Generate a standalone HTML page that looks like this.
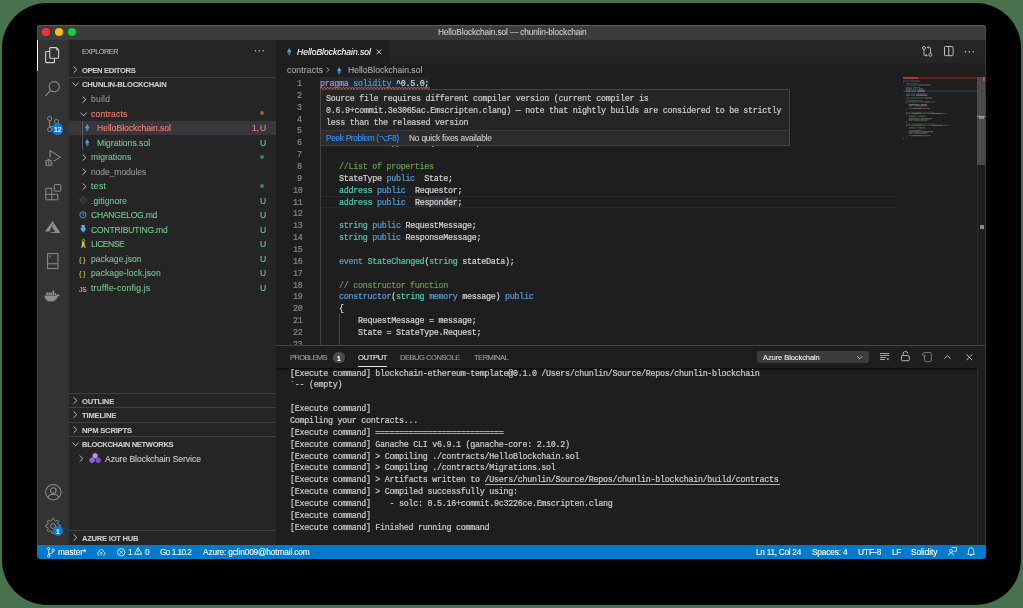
<!DOCTYPE html>
<html><head><meta charset="utf-8"><title>VS Code</title><style>
html,body{margin:0;padding:0;width:1023px;height:608px;overflow:hidden;background:#48724e;}
body{position:relative;font-family:"Liberation Sans",sans-serif;color:#cccccc;}
div{box-sizing:border-box;}
.a{position:absolute;}
svg.a{overflow:visible;}
.t{position:absolute;white-space:pre;line-height:1;-webkit-text-stroke:0.1px currentColor;will-change:transform;}
.m{font-family:"Liberation Mono",monospace;-webkit-text-stroke:0.2px currentColor;}
</style></head><body>
<div class="a" style="left:2.00px;top:3.00px;width:1019.00px;height:602.00px;background:#000;border-radius:45px;"></div>
<div class="a" style="left:37.00px;top:25.00px;width:949.00px;height:534.00px;background:#1e1e1e;border-radius:4px;"></div>
<div class="a" style="left:37.00px;top:25.00px;width:949.00px;height:14.50px;background:#3c3c3c;border-radius:4px 4px 0 0;box-shadow:inset 0 1px 0 #5e5e5e, inset 1px 0 0 #4a4a4a, inset -1px 0 0 #4a4a4a;"></div>
<svg class="a" style="left:41.00px;top:27.20px;" width="10.00" height="10.00" viewBox="0 0 10 10"><circle cx="5" cy="5" r="4.05" fill="#fe2c3e"/></svg>
<svg class="a" style="left:54.20px;top:27.20px;" width="10.00" height="10.00" viewBox="0 0 10 10"><circle cx="5" cy="5" r="4.05" fill="#fdbc0e"/></svg>
<svg class="a" style="left:67.40px;top:27.20px;" width="10.00" height="10.00" viewBox="0 0 10 10"><circle cx="5" cy="5" r="4.05" fill="#12cf3c"/></svg>
<div class="t" style="left:437.60px;top:28px;font-size:8.3px;color:#cccccc;letter-spacing:-0.118px;">HelloBlockchain.sol — chunlin-blockchain</div>
<div class="a" style="left:37.00px;top:39.50px;width:31.70px;height:505.10px;background:#333333;"></div>
<div class="a" style="left:37.00px;top:39.50px;width:1.30px;height:31.60px;background:#ffffff;"></div>
<div class="a" style="left:68.70px;top:39.50px;width:207.40px;height:505.10px;background:#252526;"></div>
<div class="a" style="left:276.10px;top:39.50px;width:709.90px;height:23.10px;background:#252526;"></div>
<div class="a" style="left:276.10px;top:39.50px;width:112.90px;height:23.10px;background:#1e1e1e;"></div>
<div class="a" style="left:37.00px;top:544.60px;width:949.00px;height:14.40px;background:#007acc;border-radius:0 0 4px 4px;"></div>
<div class="t" style="left:81.80px;top:48px;font-size:7.23px;color:#bbbbbb;letter-spacing:-0.404px;">EXPLORER</div>
<svg class="a" style="left:253.50px;top:49.00px;" width="11.00" height="3.00" viewBox="0 0 11 3"><circle cx="1.40" cy="1.8" r="0.75" fill="#c0c0c0"/><circle cx="5.25" cy="1.8" r="0.75" fill="#c0c0c0"/><circle cx="9.10" cy="1.8" r="0.75" fill="#c0c0c0"/></svg>
<svg class="a" style="left:73.10px;top:66.23px;" width="4.50" height="7.20" viewBox="0 0 4.5 7.2"><path d="M0.6 0.5 L3.9 3.6 L0.6 6.7" fill="none" stroke="#c5c5c5" stroke-width="0.9"/></svg>
<div class="t" style="left:81.80px;top:67px;font-size:7.6px;color:#cccccc;font-weight:700;letter-spacing:-0.323px;">OPEN EDITORS</div>
<div class="a" style="left:68.70px;top:77.00px;width:207.40px;height:1.00px;background:#404041;"></div>
<svg class="a" style="left:71.80px;top:82.33px;" width="7.20" height="4.50" viewBox="0 0 7.2 4.5"><path d="M0.5 0.6 L3.6 3.9 L6.7 0.6" fill="none" stroke="#c5c5c5" stroke-width="0.9"/></svg>
<div class="t" style="left:81.80px;top:81px;font-size:7.6px;color:#cccccc;font-weight:700;letter-spacing:-0.179px;">CHUNLIN-BLOCKCHAIN</div>
<div class="a" style="left:68.70px;top:120.50px;width:207.40px;height:14.50px;background:#37373d;"></div>
<div class="a" style="left:82.40px;top:120.50px;width:0.80px;height:29.00px;background:#585858;"></div>
<svg class="a" style="left:81.60px;top:95.65px;" width="4.50" height="7.20" viewBox="0 0 4.5 7.2"><path d="M0.6 0.5 L3.9 3.6 L0.6 6.7" fill="none" stroke="#c5c5c5" stroke-width="0.9"/></svg>
<div class="t" style="left:91.20px;top:95px;font-size:8.55px;color:#959595;letter-spacing:0.209px;">build</div>
<svg class="a" style="left:80.20px;top:111.65px;" width="7.20" height="4.50" viewBox="0 0 7.2 4.5"><path d="M0.5 0.6 L3.6 3.9 L6.7 0.6" fill="none" stroke="#c5c5c5" stroke-width="0.9"/></svg>
<div class="t" style="left:91.20px;top:110px;font-size:8.55px;color:#f88070;letter-spacing:0.202px;">contracts</div>
<div class="a" style="left:260.10px;top:111.05px;width:4.4px;height:4.4px;border-radius:50%;background:#9c574d;"></div>
<svg class="a" style="left:84.60px;top:124.45px;" width="4.40" height="7.40" viewBox="0 0 44 74"><path d="M22 0 L44 37 L22 49 L0 37 Z" fill="#4d9ed8"/><path d="M0 42 L22 54 L44 42 L22 74 Z" fill="#4d9ed8" opacity="0.85"/></svg>
<div class="t" style="left:96.60px;top:124px;font-size:8.55px;color:#f88070;letter-spacing:-0.006px;">HelloBlockchain.sol</div>
<div class="t" style="left:252.30px;top:124px;font-size:8.55px;color:#f88070;">1,</div>
<div class="t" style="left:260.00px;top:124px;font-size:8.55px;color:#f88070;">U</div>
<svg class="a" style="left:84.60px;top:138.95px;" width="4.40" height="7.40" viewBox="0 0 44 74"><path d="M22 0 L44 37 L22 49 L0 37 Z" fill="#4d9ed8"/><path d="M0 42 L22 54 L44 42 L22 74 Z" fill="#4d9ed8" opacity="0.85"/></svg>
<div class="t" style="left:96.60px;top:139px;font-size:8.55px;color:#73c991;letter-spacing:0.028px;">Migrations.sol</div>
<div class="t" style="left:260.00px;top:139px;font-size:8.55px;color:#73c991;">U</div>
<svg class="a" style="left:81.60px;top:153.65px;" width="4.50" height="7.20" viewBox="0 0 4.5 7.2"><path d="M0.6 0.5 L3.9 3.6 L0.6 6.7" fill="none" stroke="#c5c5c5" stroke-width="0.9"/></svg>
<div class="t" style="left:91.20px;top:153px;font-size:8.55px;color:#73c991;letter-spacing:0.085px;">migrations</div>
<div class="a" style="left:260.10px;top:154.55px;width:4.4px;height:4.4px;border-radius:50%;background:#468058;"></div>
<svg class="a" style="left:81.60px;top:168.15px;" width="4.50" height="7.20" viewBox="0 0 4.5 7.2"><path d="M0.6 0.5 L3.9 3.6 L0.6 6.7" fill="none" stroke="#c5c5c5" stroke-width="0.9"/></svg>
<div class="t" style="left:91.20px;top:168px;font-size:8.55px;color:#959595;letter-spacing:-0.080px;">node_modules</div>
<svg class="a" style="left:81.60px;top:182.65px;" width="4.50" height="7.20" viewBox="0 0 4.5 7.2"><path d="M0.6 0.5 L3.9 3.6 L0.6 6.7" fill="none" stroke="#c5c5c5" stroke-width="0.9"/></svg>
<div class="t" style="left:91.20px;top:182px;font-size:8.55px;color:#73c991;letter-spacing:0.406px;">test</div>
<div class="a" style="left:260.10px;top:183.55px;width:4.4px;height:4.4px;border-radius:50%;background:#468058;"></div>
<svg class="a" style="left:78.60px;top:196.15px;" width="8.20" height="8.20" viewBox="0 0 16 16"><path d="M8 1.2 L14.8 8 L8 14.8 L1.2 8 Z" fill="none" stroke="#4a5f6a" stroke-width="1.8"/><path d="M5.5 8 H8.5 M8 5.5 V8.5" stroke="#3f8a5a" stroke-width="1.3"/></svg>
<div class="t" style="left:91.20px;top:197px;font-size:8.55px;color:#73c991;letter-spacing:0.092px;">.gitignore</div>
<div class="t" style="left:260.00px;top:197px;font-size:8.55px;color:#73c991;">U</div>
<svg class="a" style="left:79.00px;top:210.85px;" width="7.80" height="7.80" viewBox="0 0 16 16"><circle cx="8" cy="8" r="6.3" fill="none" stroke="#519aba" stroke-width="2"/><path d="M8 4.2 V8.3 H11" fill="none" stroke="#519aba" stroke-width="1.8"/></svg>
<div class="t" style="left:91.20px;top:211px;font-size:8.55px;color:#73c991;letter-spacing:-0.234px;">CHANGELOG.md</div>
<div class="t" style="left:260.00px;top:211px;font-size:8.55px;color:#73c991;">U</div>
<svg class="a" style="left:79.80px;top:225.35px;" width="6.40" height="7.80" viewBox="0 0 13 16"><path d="M3 0 H10 V7 H13 L6.5 16 L0 7 H3 Z" fill="#5aa8e0"/></svg>
<div class="t" style="left:91.20px;top:226px;font-size:8.55px;color:#73c991;letter-spacing:-0.178px;">CONTRIBUTING.md</div>
<div class="t" style="left:260.00px;top:226px;font-size:8.55px;color:#73c991;">U</div>
<svg class="a" style="left:79.60px;top:239.15px;" width="6.40" height="9.40" viewBox="0 0 12 18"><circle cx="6.5" cy="3.2" r="2.4" fill="none" stroke="#cbcb41" stroke-width="1.5"/><path d="M4.6 5.4 Q2.6 8.5 3.6 11 L1.6 16.8 H4.4 L6.2 12.6 L8.4 16.8 H11 L8.6 11 Q9.6 8 7.6 5.6 Z" fill="#cbcb41"/></svg>
<div class="t" style="left:91.20px;top:240px;font-size:8.55px;color:#73c991;letter-spacing:-0.480px;">LICENSE</div>
<div class="t" style="left:260.00px;top:240px;font-size:8.55px;color:#73c991;">U</div>
<div class="t" style="left:78.90px;top:256px;font-size:7.4px;color:#cbcb41;letter-spacing:-0.3px;">{ }</div>
<div class="t" style="left:91.20px;top:255px;font-size:8.55px;color:#73c991;letter-spacing:0.011px;">package.json</div>
<div class="t" style="left:260.00px;top:255px;font-size:8.55px;color:#73c991;">U</div>
<div class="t" style="left:78.90px;top:270px;font-size:7.4px;color:#cbcb41;letter-spacing:-0.3px;">{ }</div>
<div class="t" style="left:91.20px;top:269px;font-size:8.55px;color:#73c991;letter-spacing:0.080px;">package-lock.json</div>
<div class="t" style="left:260.00px;top:269px;font-size:8.55px;color:#73c991;">U</div>
<div class="t" style="left:79.30px;top:287px;font-size:6.6px;color:#cbcb41;">JS</div>
<div class="t" style="left:91.20px;top:284px;font-size:8.55px;color:#73c991;letter-spacing:0.236px;">truffle-config.js</div>
<div class="t" style="left:260.00px;top:284px;font-size:8.55px;color:#73c991;">U</div>
<div class="a" style="left:68.70px;top:392.80px;width:207.40px;height:1.00px;background:#404041;"></div>
<svg class="a" style="left:73.10px;top:396.93px;" width="4.50" height="7.20" viewBox="0 0 4.5 7.2"><path d="M0.6 0.5 L3.9 3.6 L0.6 6.7" fill="none" stroke="#c5c5c5" stroke-width="0.9"/></svg>
<div class="t" style="left:81.80px;top:398px;font-size:7.6px;color:#cccccc;font-weight:700;letter-spacing:-0.188px;">OUTLINE</div>
<div class="a" style="left:68.70px;top:407.30px;width:207.40px;height:1.00px;background:#404041;"></div>
<svg class="a" style="left:73.10px;top:411.43px;" width="4.50" height="7.20" viewBox="0 0 4.5 7.2"><path d="M0.6 0.5 L3.9 3.6 L0.6 6.7" fill="none" stroke="#c5c5c5" stroke-width="0.9"/></svg>
<div class="t" style="left:81.80px;top:412px;font-size:7.6px;color:#cccccc;font-weight:700;letter-spacing:-0.163px;">TIMELINE</div>
<div class="a" style="left:68.70px;top:421.70px;width:207.40px;height:1.00px;background:#404041;"></div>
<svg class="a" style="left:73.10px;top:425.83px;" width="4.50" height="7.20" viewBox="0 0 4.5 7.2"><path d="M0.6 0.5 L3.9 3.6 L0.6 6.7" fill="none" stroke="#c5c5c5" stroke-width="0.9"/></svg>
<div class="t" style="left:81.80px;top:427px;font-size:7.6px;color:#cccccc;font-weight:700;letter-spacing:-0.191px;">NPM SCRIPTS</div>
<div class="a" style="left:68.70px;top:436.20px;width:207.40px;height:1.00px;background:#404041;"></div>
<svg class="a" style="left:71.80px;top:441.93px;" width="7.20" height="4.50" viewBox="0 0 7.2 4.5"><path d="M0.5 0.6 L3.6 3.9 L6.7 0.6" fill="none" stroke="#c5c5c5" stroke-width="0.9"/></svg>
<div class="t" style="left:81.80px;top:441px;font-size:7.6px;color:#cccccc;font-weight:700;letter-spacing:-0.320px;">BLOCKCHAIN NETWORKS</div>
<svg class="a" style="left:78.60px;top:454.75px;" width="4.50" height="7.20" viewBox="0 0 4.5 7.2"><path d="M0.6 0.5 L3.9 3.6 L0.6 6.7" fill="none" stroke="#c5c5c5" stroke-width="0.9"/></svg>
<svg class="a" style="left:89.00px;top:452.35px;" width="12.20" height="11.50" viewBox="0 0 24 22"><path d="M12 1 L17 4 L17 10 L12 13 L7 10 L7 4 Z" fill="#b68ef0"/><path d="M6 10 L11 13 L11 19 L6 22 L1 19 L1 13 Z" fill="#8f62de"/><path d="M18 10 L23 13 L23 19 L18 22 L13 19 L13 13 Z" fill="#7a4fd0"/></svg>
<div class="t" style="left:104.90px;top:455px;font-size:8.55px;color:#cccccc;letter-spacing:-0.044px;">Azure Blockchain Service</div>
<div class="a" style="left:68.70px;top:529.70px;width:207.40px;height:1.00px;background:#404041;"></div>
<svg class="a" style="left:73.10px;top:533.83px;" width="4.50" height="7.20" viewBox="0 0 4.5 7.2"><path d="M0.6 0.5 L3.9 3.6 L0.6 6.7" fill="none" stroke="#c5c5c5" stroke-width="0.9"/></svg>
<div class="t" style="left:81.80px;top:535px;font-size:7.6px;color:#cccccc;font-weight:700;letter-spacing:-0.249px;">AZURE IOT HUB</div>
<svg class="a" style="left:44.00px;top:46.00px;" width="16.00" height="18.00" viewBox="0 0 16 18"><path d="M5.75 5.45 H2.4 Q1.65 5.45 1.65 6.2 V15.9 Q1.65 16.65 2.4 16.65 H9.7 Q10.45 16.65 10.45 15.9 V12.25" fill="none" stroke="#d0d0d0" stroke-width="1.1"/><path d="M6.5 1.65 H12.3 L14.65 4.0 V11.5 Q14.65 12.25 13.9 12.25 H6.5 Q5.75 12.25 5.75 11.5 V2.4 Q5.75 1.65 6.5 1.65 Z" fill="none" stroke="#d0d0d0" stroke-width="1.1"/><path d="M12.3 1.65 V4.0 H14.65" fill="none" stroke="#d0d0d0" stroke-width="0.8"/></svg>
<svg class="a" style="left:44.10px;top:80.10px;" width="16.00" height="17.00" viewBox="0 0 16 17"><circle cx="10.2" cy="6.7" r="5.1" fill="none" stroke="#8d8d8d" stroke-width="1.05"/><path d="M6.5 10.4 L1.4 16.2" stroke="#8d8d8d" stroke-width="1.15"/></svg>
<svg class="a" style="left:45.50px;top:115.00px;" width="14.00" height="17.00" viewBox="0 0 14 17"><circle cx="3.7" cy="3.5" r="2.1" fill="none" stroke="#8d8d8d" stroke-width="1"/><circle cx="3.7" cy="14.5" r="2.1" fill="none" stroke="#8d8d8d" stroke-width="1"/><circle cx="10.5" cy="6.5" r="2.1" fill="none" stroke="#8d8d8d" stroke-width="1"/><path d="M3.7 5.6 V12.4 M10.5 8.6 Q10.5 10.8 3.7 11.8" fill="none" stroke="#8d8d8d" stroke-width="1"/></svg>
<div class="a" style="left:51.5px;top:123.3px;width:11.8px;height:11.8px;border-radius:50%;background:#0e7ad3;"></div>
<div class="t" style="left:53.90px;top:126px;font-size:7.0px;color:#ffffff;letter-spacing:-0.2px;-webkit-text-stroke:0.15px #fff;">12</div>
<svg class="a" style="left:42.00px;top:146.00px;" width="22.00" height="24.00" viewBox="0 0 22 24"><path d="M8.1 11.4 V4.6 L18.3 11.1 L11.9 15.1" fill="none" stroke="#8d8d8d" stroke-width="1.05" stroke-linejoin="round"/><ellipse cx="6.7" cy="16.9" rx="2.5" ry="3.0" fill="none" stroke="#8d8d8d" stroke-width="1"/><path d="M4.8 14.4 Q6.7 12.4 8.6 14.4 M6.7 14.2 V19.6" fill="none" stroke="#8d8d8d" stroke-width="0.9"/><path d="M3.0 14.6 L4.4 15.3 M10.4 14.6 L9.0 15.3 M2.6 17.2 H4.2 M10.8 17.2 H9.2 M3.0 19.9 L4.5 19.1 M10.4 19.9 L8.9 19.1" stroke="#8d8d8d" stroke-width="0.9"/></svg>
<svg class="a" style="left:44.60px;top:183.90px;" width="16.50" height="16.50" viewBox="0 0 16.5 16.5"><path d="M0.8 4.3 H6.8 V10.3 H12.8 V15.3 Q12.8 15.8 12.3 15.8 H1.3 Q0.8 15.8 0.8 15.3 Z M6.8 10.3 V15.8 M0.8 10.3 H6.8" fill="none" stroke="#8d8d8d" stroke-width="1"/><rect x="9.3" y="0.6" width="6.5" height="6.5" rx="0.8" fill="none" stroke="#8d8d8d" stroke-width="1"/></svg>
<svg class="a" style="left:42.00px;top:216.00px;" width="22.00" height="20.00" viewBox="0 0 22 20"><path d="M3.0 15.6 L10.6 4.9 L11.6 5.8 L7.6 15.6 Z" fill="#8d8d8d"/><path d="M11.5 6.4 L18.4 16.9 L7.2 16.9 L13.1 15.6 L10.0 10.9 Z" fill="#8d8d8d"/></svg>
<svg class="a" style="left:46.80px;top:252.80px;" width="11.60" height="16.20" viewBox="0 0 11.6 16.2"><rect x="0.6" y="0.6" width="10.4" height="15" fill="none" stroke="#8d8d8d" stroke-width="1"/><path d="M0.6 10.8 H11" stroke="#8d8d8d" stroke-width="1"/><path d="M2.2 2.6 H3.6 V4 H2.2 Z" fill="none" stroke="#8d8d8d" stroke-width="0.5"/></svg>
<svg class="a" style="left:44.40px;top:289.60px;" width="16.40" height="12.00" viewBox="0 0 16.4 12"><path d="M0.3 5.4 H12.2 Q12.8 4.0 14.0 4.4 Q15.6 4.8 16.0 5.4 Q15.2 6.2 13.8 6.4 Q12.2 11.4 6.6 11.5 Q1.2 11.5 0.3 5.4 Z" fill="#8d8d8d"/><rect x="2.2" y="2.4" width="1.7" height="2.6" fill="#8d8d8d"/><rect x="4.3" y="2.4" width="1.7" height="2.6" fill="#8d8d8d"/><rect x="6.4" y="2.4" width="1.7" height="2.6" fill="#8d8d8d"/><rect x="8.5" y="0.4" width="1.7" height="4.6" fill="#8d8d8d"/><rect x="10.6" y="3.2" width="1.5" height="1.8" fill="#8d8d8d"/></svg>
<svg class="a" style="left:44.50px;top:483.50px;" width="16.60" height="16.60" viewBox="0 0 16.6 16.6"><circle cx="8.3" cy="8.3" r="7.7" fill="none" stroke="#8d8d8d" stroke-width="1.05"/><circle cx="8.3" cy="6.6" r="2.8" fill="none" stroke="#8d8d8d" stroke-width="1.05"/><path d="M2.8 13.8 Q3.6 10.2 8.3 10.2 Q13 10.2 13.8 13.8" fill="none" stroke="#8d8d8d" stroke-width="1.05"/></svg>
<svg class="a" style="left:44.80px;top:518.00px;" width="16.00" height="16.00" viewBox="0 0 16 16"><path d="M15.36 7.27 L15.36 8.73 L13.17 9.57 L12.76 10.55 L13.72 12.69 L12.69 13.72 L10.55 12.76 L9.57 13.17 L8.73 15.36 L7.27 15.36 L6.43 13.17 L5.45 12.76 L3.31 13.72 L2.28 12.69 L3.24 10.55 L2.83 9.57 L0.64 8.73 L0.64 7.27 L2.83 6.43 L3.24 5.45 L2.28 3.31 L3.31 2.28 L5.45 3.24 L6.43 2.83 L7.27 0.64 L8.73 0.64 L9.57 2.83 L10.55 3.24 L12.69 2.28 L13.72 3.31 L12.76 5.45 L13.17 6.43 Z" fill="none" stroke="#8d8d8d" stroke-width="1" stroke-linejoin="round"/><circle cx="8" cy="8" r="2.4" fill="none" stroke="#8d8d8d" stroke-width="1"/></svg>
<div class="a" style="left:52.7px;top:525.7px;width:10.6px;height:10.6px;border-radius:50%;background:#0e7ad3;"></div>
<div class="t" style="left:56.30px;top:529px;font-size:6.8px;color:#ffffff;font-weight:700;-webkit-text-stroke:0;">1</div>
<svg class="a" style="left:286.90px;top:47.80px;" width="4.40" height="7.40" viewBox="0 0 44 74"><path d="M22 0 L44 37 L22 49 L0 37 Z" fill="#4d9ed8"/><path d="M0 42 L22 54 L44 42 L22 74 Z" fill="#4d9ed8" opacity="0.85"/></svg>
<div class="t" style="left:297.30px;top:48px;font-size:8.55px;color:#ffffff;font-style:italic;letter-spacing:-0.012px;">HelloBlockchain.sol</div>
<svg class="a" style="left:375.60px;top:48.80px;" width="5.80" height="5.80" viewBox="0 0 6 6"><path d="M0.5 0.5 L5.5 5.5 M5.5 0.5 L0.5 5.5" stroke="#d0d0d0" stroke-width="0.95"/></svg>
<svg class="a" style="left:921.80px;top:46.30px;" width="10.40" height="10.80" viewBox="0 0 10.4 10.8"><circle cx="2" cy="2" r="1.5" fill="none" stroke="#c5c5c5" stroke-width="0.9"/><circle cx="8.4" cy="8.8" r="1.5" fill="none" stroke="#c5c5c5" stroke-width="0.9"/><path d="M2 3.5 V8.8 Q2 9.4 2.6 9.4 H5 M4 8.3 L5.1 9.4 L4 10.5" fill="none" stroke="#c5c5c5" stroke-width="0.9"/><path d="M8.4 7.3 V2 Q8.4 1.4 7.8 1.4 H5.4 M6.4 0.3 L5.3 1.4 L6.4 2.5" fill="none" stroke="#c5c5c5" stroke-width="0.9"/></svg>
<svg class="a" style="left:943.60px;top:46.40px;" width="9.60" height="10.20" viewBox="0 0 9.6 10.2"><rect x="0.5" y="0.5" width="8.6" height="9.2" rx="0.8" fill="none" stroke="#c5c5c5" stroke-width="0.95"/><path d="M4.8 0.5 V9.7" stroke="#c5c5c5" stroke-width="0.95"/></svg>
<svg class="a" style="left:964.00px;top:49.60px;" width="11.00" height="3.00" viewBox="0 0 11 3"><circle cx="1.50" cy="1.8" r="0.8" fill="#c5c5c5"/><circle cx="5.35" cy="1.8" r="0.8" fill="#c5c5c5"/><circle cx="9.20" cy="1.8" r="0.8" fill="#c5c5c5"/></svg>
<div class="t" style="left:287.00px;top:66px;font-size:8.55px;color:#a9a9a9;letter-spacing:0.164px;">contracts</div>
<svg class="a" style="left:326.40px;top:67.20px;" width="3.80" height="5.60" viewBox="0 0 3.8 5.6"><path d="M0.5 0.4 L3.2 2.8 L0.5 5.2" fill="none" stroke="#a9a9a9" stroke-width="0.8"/></svg>
<svg class="a" style="left:337.40px;top:66.60px;" width="4.40" height="7.40" viewBox="0 0 44 74"><path d="M22 0 L44 37 L22 49 L0 37 Z" fill="#4d9ed8"/><path d="M0 42 L22 54 L44 42 L22 74 Z" fill="#4d9ed8" opacity="0.85"/></svg>
<div class="t" style="left:347.70px;top:66px;font-size:8.55px;color:#a9a9a9;letter-spacing:0.011px;">HelloBlockchain.sol</div>
<div class="a" style="left:320.00px;top:77.20px;width:109.41px;height:11.86px;background:#1f2a35;"></div>
<div class="a" style="left:320.00px;top:195.80px;width:577.00px;height:11.86px;background:transparent;border-top:1px solid #282828;border-bottom:1px solid #282828;"></div>
<div class="a" style="left:414.64px;top:196.80px;width:43.81px;height:9.86px;background:#2e3236;"></div>
<div class="a" style="left:320.00px;top:124.64px;width:0.90px;height:225.34px;background:#404040;"></div>
<div class="a" style="left:339.20px;top:314.40px;width:0.80px;height:35.58px;background:#404040;"></div>
<div class="a" style="left:276px;top:62px;width:700px;height:283px;overflow:hidden;">
<div class="t m" style="left:21.44px;top:18px;font-size:8.4px;color:#858585;letter-spacing:-0.283px;">1</div>
<div class="t m" style="left:44.00px;top:18px;font-size:8.4px;color:#d4d4d4;letter-spacing:-0.283px;"><span style="color:#c586c0">pragma</span><span style="color:#d4d4d4"> </span><span style="color:#569cd6">solidity</span><span style="color:#d4d4d4"> ^0.5.0;</span></div>
<div class="t m" style="left:21.44px;top:30px;font-size:8.4px;color:#858585;letter-spacing:-0.283px;">2</div>
<div class="t m" style="left:21.44px;top:42px;font-size:8.4px;color:#858585;letter-spacing:-0.283px;">3</div>
<div class="t m" style="left:44.00px;top:42px;font-size:8.4px;color:#d4d4d4;letter-spacing:-0.283px;"><span style="color:#569cd6">contract</span><span style="color:#d4d4d4"> </span><span style="color:#4ec9b0">HelloBlockchain</span></div>
<div class="t m" style="left:21.44px;top:54px;font-size:8.4px;color:#858585;letter-spacing:-0.283px;">4</div>
<div class="t m" style="left:44.00px;top:54px;font-size:8.4px;color:#d4d4d4;letter-spacing:-0.283px;"><span style="color:#d4d4d4">{</span></div>
<div class="t m" style="left:21.44px;top:65px;font-size:8.4px;color:#858585;letter-spacing:-0.283px;">5</div>
<div class="t m" style="left:44.00px;top:65px;font-size:8.4px;color:#d4d4d4;letter-spacing:-0.283px;"><span style="color:#6a9955">     //Set of States</span></div>
<div class="t m" style="left:21.44px;top:77px;font-size:8.4px;color:#858585;letter-spacing:-0.283px;">6</div>
<div class="t m" style="left:44.00px;top:77px;font-size:8.4px;color:#d4d4d4;letter-spacing:-0.283px;"><span style="color:#d4d4d4">    </span><span style="color:#569cd6">enum</span><span style="color:#d4d4d4"> </span><span style="color:#4ec9b0">StateType</span><span style="color:#d4d4d4">   Request  Respond </span></div>
<div class="t m" style="left:21.44px;top:89px;font-size:8.4px;color:#858585;letter-spacing:-0.283px;">7</div>
<div class="t m" style="left:21.44px;top:101px;font-size:8.4px;color:#858585;letter-spacing:-0.283px;">8</div>
<div class="t m" style="left:44.00px;top:101px;font-size:8.4px;color:#d4d4d4;letter-spacing:-0.283px;"><span style="color:#6a9955">    //List of properties</span></div>
<div class="t m" style="left:21.44px;top:113px;font-size:8.4px;color:#858585;letter-spacing:-0.283px;">9</div>
<div class="t m" style="left:44.00px;top:113px;font-size:8.4px;color:#d4d4d4;letter-spacing:-0.283px;"><span style="color:#d4d4d4">    StateType </span><span style="color:#569cd6">public</span><span style="color:#d4d4d4">  State;</span></div>
<div class="t m" style="left:16.69px;top:125px;font-size:8.4px;color:#858585;letter-spacing:-0.283px;">10</div>
<div class="t m" style="left:44.00px;top:125px;font-size:8.4px;color:#d4d4d4;letter-spacing:-0.283px;"><span style="color:#d4d4d4">    </span><span style="color:#4ec9b0">address</span><span style="color:#d4d4d4"> </span><span style="color:#569cd6">public</span><span style="color:#d4d4d4">  Requestor;</span></div>
<div class="t m" style="left:16.69px;top:137px;font-size:8.4px;color:#8a8a8a;letter-spacing:-0.283px;">11</div>
<div class="t m" style="left:44.00px;top:137px;font-size:8.4px;color:#d4d4d4;letter-spacing:-0.283px;"><span style="color:#d4d4d4">    </span><span style="color:#4ec9b0">address</span><span style="color:#d4d4d4"> </span><span style="color:#569cd6">public</span><span style="color:#d4d4d4">  Responder;</span></div>
<div class="t m" style="left:16.69px;top:148px;font-size:8.4px;color:#858585;letter-spacing:-0.283px;">12</div>
<div class="t m" style="left:16.69px;top:160px;font-size:8.4px;color:#858585;letter-spacing:-0.283px;">13</div>
<div class="t m" style="left:44.00px;top:160px;font-size:8.4px;color:#d4d4d4;letter-spacing:-0.283px;"><span style="color:#d4d4d4">    </span><span style="color:#4ec9b0">string</span><span style="color:#d4d4d4"> </span><span style="color:#569cd6">public</span><span style="color:#d4d4d4"> RequestMessage;</span></div>
<div class="t m" style="left:16.69px;top:172px;font-size:8.4px;color:#858585;letter-spacing:-0.283px;">14</div>
<div class="t m" style="left:44.00px;top:172px;font-size:8.4px;color:#d4d4d4;letter-spacing:-0.283px;"><span style="color:#d4d4d4">    </span><span style="color:#4ec9b0">string</span><span style="color:#d4d4d4"> </span><span style="color:#569cd6">public</span><span style="color:#d4d4d4"> ResponseMessage;</span></div>
<div class="t m" style="left:16.69px;top:184px;font-size:8.4px;color:#858585;letter-spacing:-0.283px;">15</div>
<div class="t m" style="left:16.69px;top:196px;font-size:8.4px;color:#858585;letter-spacing:-0.283px;">16</div>
<div class="t m" style="left:44.00px;top:196px;font-size:8.4px;color:#d4d4d4;letter-spacing:-0.283px;"><span style="color:#d4d4d4">    </span><span style="color:#569cd6">event</span><span style="color:#d4d4d4"> </span><span style="color:#4ec9b0">StateChanged</span><span style="color:#d4d4d4">(</span><span style="color:#4ec9b0">string</span><span style="color:#d4d4d4"> stateData);</span></div>
<div class="t m" style="left:16.69px;top:208px;font-size:8.4px;color:#858585;letter-spacing:-0.283px;">17</div>
<div class="t m" style="left:16.69px;top:220px;font-size:8.4px;color:#858585;letter-spacing:-0.283px;">18</div>
<div class="t m" style="left:44.00px;top:220px;font-size:8.4px;color:#d4d4d4;letter-spacing:-0.283px;"><span style="color:#6a9955">    // constructor function</span></div>
<div class="t m" style="left:16.69px;top:231px;font-size:8.4px;color:#858585;letter-spacing:-0.283px;">19</div>
<div class="t m" style="left:44.00px;top:231px;font-size:8.4px;color:#d4d4d4;letter-spacing:-0.283px;"><span style="color:#d4d4d4">    </span><span style="color:#569cd6">constructor</span><span style="color:#d4d4d4">(</span><span style="color:#4ec9b0">string</span><span style="color:#d4d4d4"> </span><span style="color:#569cd6">memory</span><span style="color:#d4d4d4"> message) </span><span style="color:#569cd6">public</span></div>
<div class="t m" style="left:16.69px;top:243px;font-size:8.4px;color:#858585;letter-spacing:-0.283px;">20</div>
<div class="t m" style="left:44.00px;top:243px;font-size:8.4px;color:#d4d4d4;letter-spacing:-0.283px;"><span style="color:#d4d4d4">    {</span></div>
<div class="t m" style="left:16.69px;top:255px;font-size:8.4px;color:#858585;letter-spacing:-0.283px;">21</div>
<div class="t m" style="left:44.00px;top:255px;font-size:8.4px;color:#d4d4d4;letter-spacing:-0.283px;"><span style="color:#d4d4d4">        RequestMessage = message;</span></div>
<div class="t m" style="left:16.69px;top:267px;font-size:8.4px;color:#858585;letter-spacing:-0.283px;">22</div>
<div class="t m" style="left:44.00px;top:267px;font-size:8.4px;color:#d4d4d4;letter-spacing:-0.283px;"><span style="color:#d4d4d4">        State = StateType.Request;</span></div>
<div class="t m" style="left:16.69px;top:279px;font-size:8.4px;color:#858585;letter-spacing:-0.283px;">23</div>
</div>
<svg class="a" style="left:320.00px;top:86.86px;" width="109.40" height="2.00" viewBox="0 0 109.4 2"><path d="M0 1.5 L1.55 0.4 L3.10 1.6 L4.65 0.4 L6.20 1.6 L7.75 0.4 L9.30 1.6 L10.85 0.4 L12.40 1.6 L13.95 0.4 L15.50 1.6 L17.05 0.4 L18.60 1.6 L20.15 0.4 L21.70 1.6 L23.25 0.4 L24.80 1.6 L26.35 0.4 L27.90 1.6 L29.45 0.4 L31.00 1.6 L32.55 0.4 L34.10 1.6 L35.65 0.4 L37.20 1.6 L38.75 0.4 L40.30 1.6 L41.85 0.4 L43.40 1.6 L44.95 0.4 L46.50 1.6 L48.05 0.4 L49.60 1.6 L51.15 0.4 L52.70 1.6 L54.25 0.4 L55.80 1.6 L57.35 0.4 L58.90 1.6 L60.45 0.4 L62.00 1.6 L63.55 0.4 L65.10 1.6 L66.65 0.4 L68.20 1.6 L69.75 0.4 L71.30 1.6 L72.85 0.4 L74.40 1.6 L75.95 0.4 L77.50 1.6 L79.05 0.4 L80.60 1.6 L82.15 0.4 L83.70 1.6 L85.25 0.4 L86.80 1.6 L88.35 0.4 L89.90 1.6 L91.45 0.4 L93.00 1.6 L94.55 0.4 L96.10 1.6 L97.65 0.4 L99.20 1.6 L100.75 0.4 L102.30 1.6 L103.85 0.4 L105.40 1.6 L106.95 0.4 L108.50 1.6 L110.05 0.4" fill="none" stroke="#e06a4e" stroke-width="0.95"/></svg>
<div class="a" style="left:320.30px;top:89.30px;width:469.80px;height:56.60px;background:#252526;border:1px solid #454545;"></div>
<div class="a" style="left:321.30px;top:130.30px;width:467.80px;height:14.60px;background:#2c2c2d;border-top:1px solid #3a3a3a;"></div>
<div class="t m" style="left:325.80px;top:95px;font-size:8.4px;color:#cccccc;letter-spacing:-0.283px;">Source file requires different compiler version (current compiler is</div>
<div class="t m" style="left:325.80px;top:107px;font-size:8.4px;color:#cccccc;letter-spacing:-0.283px;">0.6.9+commit.3e3065ac.Emscripten.clang) — note that nightly builds are considered to be strictly</div>
<div class="t m" style="left:325.80px;top:119px;font-size:8.4px;color:#cccccc;letter-spacing:-0.283px;">less than the released version</div>
<div class="t" style="left:325.70px;top:134px;font-size:8.3px;color:#3794ff;letter-spacing:-0.313px;">Peek Problem (⌥F8)</div>
<div class="t" style="left:409.00px;top:134px;font-size:8.3px;color:#cccccc;letter-spacing:-0.165px;">No quick fixes available</div>
<div class="a" style="left:903.00px;top:90.00px;width:74.00px;height:1.80px;background:#1f3142;"></div>
<svg class="a" style="left:903.00px;top:77.80px;" width="74.00" height="70.00" viewBox="0 0 74 70"><g opacity="0.42"><rect x="0.00" y="0.00" width="4.32" height="0.95" fill="#c586c0"/><rect x="5.04" y="0.00" width="5.76" height="0.95" fill="#569cd6"/><rect x="11.52" y="0.00" width="5.04" height="0.95" fill="#d4d4d4"/><rect x="0.00" y="2.60" width="5.76" height="0.95" fill="#569cd6"/><rect x="6.48" y="2.60" width="10.80" height="0.95" fill="#4ec9b0"/><rect x="0.00" y="3.90" width="0.72" height="0.95" fill="#d4d4d4"/><rect x="3.60" y="5.20" width="3.60" height="0.95" fill="#6a9955"/><rect x="7.92" y="5.20" width="1.44" height="0.95" fill="#6a9955"/><rect x="10.08" y="5.20" width="4.32" height="0.95" fill="#6a9955"/><rect x="2.88" y="6.50" width="2.88" height="0.95" fill="#569cd6"/><rect x="6.48" y="6.50" width="6.48" height="0.95" fill="#4ec9b0"/><rect x="13.68" y="6.50" width="0.72" height="0.95" fill="#d4d4d4"/><rect x="15.12" y="6.50" width="5.76" height="0.95" fill="#d4d4d4"/><rect x="21.60" y="6.50" width="5.76" height="0.95" fill="#d4d4d4"/><rect x="2.88" y="9.10" width="4.32" height="0.95" fill="#6a9955"/><rect x="7.92" y="9.10" width="1.44" height="0.95" fill="#6a9955"/><rect x="10.08" y="9.10" width="7.20" height="0.95" fill="#6a9955"/><rect x="2.88" y="10.40" width="6.48" height="0.95" fill="#d4d4d4"/><rect x="10.08" y="10.40" width="4.32" height="0.95" fill="#569cd6"/><rect x="15.84" y="10.40" width="4.32" height="0.95" fill="#d4d4d4"/><rect x="2.88" y="11.70" width="5.04" height="0.95" fill="#4ec9b0"/><rect x="8.64" y="11.70" width="4.32" height="0.95" fill="#569cd6"/><rect x="14.40" y="11.70" width="7.20" height="0.95" fill="#d4d4d4"/><rect x="2.88" y="13.00" width="5.04" height="0.95" fill="#4ec9b0"/><rect x="8.64" y="13.00" width="4.32" height="0.95" fill="#569cd6"/><rect x="14.40" y="13.00" width="7.20" height="0.95" fill="#d4d4d4"/><rect x="2.88" y="15.60" width="4.32" height="0.95" fill="#4ec9b0"/><rect x="7.92" y="15.60" width="4.32" height="0.95" fill="#569cd6"/><rect x="12.96" y="15.60" width="10.80" height="0.95" fill="#d4d4d4"/><rect x="2.88" y="16.90" width="4.32" height="0.95" fill="#4ec9b0"/><rect x="7.92" y="16.90" width="4.32" height="0.95" fill="#569cd6"/><rect x="12.96" y="16.90" width="11.52" height="0.95" fill="#d4d4d4"/><rect x="2.88" y="19.50" width="3.60" height="0.95" fill="#569cd6"/><rect x="7.20" y="19.50" width="8.64" height="0.95" fill="#4ec9b0"/><rect x="15.84" y="19.50" width="0.72" height="0.95" fill="#d4d4d4"/><rect x="16.56" y="19.50" width="4.32" height="0.95" fill="#4ec9b0"/><rect x="21.60" y="19.50" width="7.92" height="0.95" fill="#d4d4d4"/><rect x="2.88" y="22.10" width="1.44" height="0.95" fill="#6a9955"/><rect x="5.04" y="22.10" width="7.92" height="0.95" fill="#6a9955"/><rect x="13.68" y="22.10" width="5.76" height="0.95" fill="#6a9955"/><rect x="2.88" y="23.40" width="7.92" height="0.95" fill="#569cd6"/><rect x="10.80" y="23.40" width="0.72" height="0.95" fill="#d4d4d4"/><rect x="11.52" y="23.40" width="4.32" height="0.95" fill="#4ec9b0"/><rect x="16.56" y="23.40" width="4.32" height="0.95" fill="#569cd6"/><rect x="21.60" y="23.40" width="5.76" height="0.95" fill="#d4d4d4"/><rect x="28.08" y="23.40" width="4.32" height="0.95" fill="#569cd6"/><rect x="2.88" y="24.70" width="0.72" height="0.95" fill="#d4d4d4"/><rect x="5.76" y="26.00" width="10.08" height="0.95" fill="#d4d4d4"/><rect x="16.56" y="26.00" width="0.72" height="0.95" fill="#d4d4d4"/><rect x="18.00" y="26.00" width="5.76" height="0.95" fill="#d4d4d4"/><rect x="5.76" y="27.30" width="3.60" height="0.95" fill="#d4d4d4"/><rect x="10.08" y="27.30" width="0.72" height="0.95" fill="#d4d4d4"/><rect x="11.52" y="27.30" width="12.96" height="0.95" fill="#d4d4d4"/><rect x="5.76" y="29.90" width="2.88" height="0.95" fill="#c586c0"/><rect x="9.36" y="29.90" width="9.36" height="0.95" fill="#d4d4d4"/><rect x="18.72" y="29.90" width="6.48" height="0.95" fill="#ce9178"/><rect x="25.20" y="29.90" width="1.44" height="0.95" fill="#d4d4d4"/><rect x="2.88" y="31.20" width="0.72" height="0.95" fill="#d4d4d4"/><rect x="2.88" y="33.80" width="1.44" height="0.95" fill="#6a9955"/><rect x="5.04" y="33.80" width="2.88" height="0.95" fill="#6a9955"/><rect x="8.64" y="33.80" width="2.88" height="0.95" fill="#6a9955"/><rect x="12.24" y="33.80" width="5.76" height="0.95" fill="#6a9955"/><rect x="18.72" y="33.80" width="1.44" height="0.95" fill="#6a9955"/><rect x="20.88" y="33.80" width="2.88" height="0.95" fill="#6a9955"/><rect x="24.48" y="33.80" width="0.72" height="0.95" fill="#6a9955"/><rect x="25.92" y="33.80" width="5.04" height="0.95" fill="#6a9955"/><rect x="2.88" y="35.10" width="5.76" height="0.95" fill="#569cd6"/><rect x="9.36" y="35.10" width="8.64" height="0.95" fill="#dcdcaa"/><rect x="18.00" y="35.10" width="4.32" height="0.95" fill="#4ec9b0"/><rect x="23.04" y="35.10" width="4.32" height="0.95" fill="#569cd6"/><rect x="28.08" y="35.10" width="10.80" height="0.95" fill="#d4d4d4"/><rect x="39.60" y="35.10" width="4.32" height="0.95" fill="#569cd6"/><rect x="2.88" y="36.40" width="0.72" height="0.95" fill="#d4d4d4"/><rect x="5.76" y="37.70" width="6.48" height="0.95" fill="#d4d4d4"/><rect x="12.96" y="37.70" width="0.72" height="0.95" fill="#d4d4d4"/><rect x="14.40" y="37.70" width="2.16" height="0.95" fill="#569cd6"/><rect x="16.56" y="37.70" width="5.76" height="0.95" fill="#d4d4d4"/><rect x="5.76" y="40.30" width="10.08" height="0.95" fill="#d4d4d4"/><rect x="16.56" y="40.30" width="0.72" height="0.95" fill="#d4d4d4"/><rect x="18.00" y="40.30" width="10.80" height="0.95" fill="#d4d4d4"/><rect x="5.76" y="41.60" width="3.60" height="0.95" fill="#d4d4d4"/><rect x="10.08" y="41.60" width="0.72" height="0.95" fill="#d4d4d4"/><rect x="11.52" y="41.60" width="12.96" height="0.95" fill="#d4d4d4"/><rect x="2.88" y="42.90" width="0.72" height="0.95" fill="#d4d4d4"/><rect x="2.88" y="45.50" width="1.44" height="0.95" fill="#6a9955"/><rect x="5.04" y="45.50" width="2.88" height="0.95" fill="#6a9955"/><rect x="8.64" y="45.50" width="2.88" height="0.95" fill="#6a9955"/><rect x="12.24" y="45.50" width="5.76" height="0.95" fill="#6a9955"/><rect x="18.72" y="45.50" width="1.44" height="0.95" fill="#6a9955"/><rect x="20.88" y="45.50" width="2.88" height="0.95" fill="#6a9955"/><rect x="24.48" y="45.50" width="0.72" height="0.95" fill="#6a9955"/><rect x="25.92" y="45.50" width="5.76" height="0.95" fill="#6a9955"/><rect x="2.88" y="46.80" width="5.76" height="0.95" fill="#569cd6"/><rect x="9.36" y="46.80" width="9.36" height="0.95" fill="#dcdcaa"/><rect x="18.72" y="46.80" width="4.32" height="0.95" fill="#4ec9b0"/><rect x="23.76" y="46.80" width="4.32" height="0.95" fill="#569cd6"/><rect x="28.80" y="46.80" width="11.52" height="0.95" fill="#d4d4d4"/><rect x="41.04" y="46.80" width="4.32" height="0.95" fill="#569cd6"/><rect x="2.88" y="48.10" width="0.72" height="0.95" fill="#d4d4d4"/><rect x="5.76" y="49.40" width="6.48" height="0.95" fill="#d4d4d4"/><rect x="12.96" y="49.40" width="0.72" height="0.95" fill="#d4d4d4"/><rect x="14.40" y="49.40" width="2.16" height="0.95" fill="#569cd6"/><rect x="16.56" y="49.40" width="5.76" height="0.95" fill="#d4d4d4"/><rect x="5.76" y="52.00" width="1.44" height="0.95" fill="#6a9955"/><rect x="7.92" y="52.00" width="2.88" height="0.95" fill="#6a9955"/><rect x="11.52" y="52.00" width="7.92" height="0.95" fill="#6a9955"/><rect x="5.76" y="53.30" width="10.80" height="0.95" fill="#d4d4d4"/><rect x="17.28" y="53.30" width="0.72" height="0.95" fill="#d4d4d4"/><rect x="18.72" y="53.30" width="11.52" height="0.95" fill="#d4d4d4"/><rect x="5.76" y="54.60" width="3.60" height="0.95" fill="#d4d4d4"/><rect x="10.08" y="54.60" width="0.72" height="0.95" fill="#d4d4d4"/><rect x="11.52" y="54.60" width="12.96" height="0.95" fill="#d4d4d4"/><rect x="5.76" y="57.20" width="2.88" height="0.95" fill="#c586c0"/><rect x="9.36" y="57.20" width="9.36" height="0.95" fill="#d4d4d4"/><rect x="18.72" y="57.20" width="7.20" height="0.95" fill="#ce9178"/><rect x="25.92" y="57.20" width="1.44" height="0.95" fill="#d4d4d4"/><rect x="2.88" y="58.50" width="0.72" height="0.95" fill="#d4d4d4"/><rect x="0.00" y="59.80" width="0.72" height="0.95" fill="#d4d4d4"/></g></svg>
<div class="a" style="left:903.00px;top:77.00px;width:74.00px;height:1.60px;background:#701c1c;"></div>
<div class="a" style="left:903.00px;top:77.00px;width:15.20px;height:1.60px;background:#cf2a2a;"></div>
<div class="a" style="left:977.20px;top:77.00px;width:0.80px;height:268.00px;background:#2b2b2b;"></div>
<div class="a" style="left:976.80px;top:76.80px;width:9.20px;height:88.00px;background:#4a4a4a;"></div>
<div class="a" style="left:983.20px;top:77.00px;width:2.80px;height:4.00px;background:#e04040;"></div>
<div class="a" style="left:977.00px;top:115.60px;width:9.00px;height:1.20px;background:#a0a0a0;"></div>
<div class="a" style="left:978.50px;top:117.20px;width:5.50px;height:1.60px;background:#8a8a8a;"></div>
<div class="a" style="left:980.00px;top:224.60px;width:3.60px;height:4.20px;background:#8a8a8a;"></div>
<div class="a" style="left:276.10px;top:344.60px;width:709.90px;height:200.00px;background:#1e1e1e;"></div>
<div class="a" style="left:276.10px;top:344.60px;width:709.90px;height:0.90px;background:#454545;"></div>
<div class="t" style="left:289.90px;top:354px;font-size:7.6px;color:#9d9d9d;letter-spacing:-0.672px;">PROBLEMS</div>
<div class="a" style="left:333.25px;top:351.75px;width:11.7px;height:11.7px;border-radius:50%;background:#4d4d4d;"></div>
<div class="t" style="left:337.20px;top:356px;font-size:6.8px;color:#ffffff;font-weight:700;">1</div>
<div class="t" style="left:357.90px;top:354px;font-size:7.6px;color:#e7e7e7;letter-spacing:-0.364px;">OUTPUT</div>
<div class="a" style="left:357.90px;top:365.60px;width:28.90px;height:0.90px;background:#e7e7e7;"></div>
<div class="t" style="left:400.20px;top:354px;font-size:7.6px;color:#9d9d9d;letter-spacing:-0.504px;">DEBUG CONSOLE</div>
<div class="t" style="left:473.60px;top:354px;font-size:7.6px;color:#9d9d9d;letter-spacing:-0.529px;">TERMINAL</div>
<div class="a" style="left:757.00px;top:351.00px;width:111.50px;height:12.00px;background:#3c3c3c;border-radius:2.5px;"></div>
<div class="t" style="left:762.90px;top:354px;font-size:7.6px;color:#f0f0f0;letter-spacing:-0.125px;">Azure Blockchain</div>
<svg class="a" style="left:856.80px;top:355.60px;" width="5.40" height="3.20" viewBox="0 0 5.4 3.2"><path d="M0.4 0.4 L2.7 2.7 L5 0.4" fill="none" stroke="#d0d0d0" stroke-width="0.85"/></svg>
<svg class="a" style="left:879.60px;top:352.00px;" width="10.00" height="9.00" viewBox="0 0 10 9"><path d="M0 1.5 H9.2 M0 3.5 H9.2 M0 5.5 H6.0 M0 7.5 H5.0" stroke="#c5c5c5" stroke-width="0.8"/><path d="M6.6 5.8 L8.8 8.2 M8.8 5.8 L6.6 8.2" stroke="#c5c5c5" stroke-width="0.7"/></svg>
<svg class="a" style="left:901.40px;top:351.40px;" width="8.80" height="10.20" viewBox="0 0 8.8 10.2"><rect x="0.5" y="4.6" width="7.8" height="5.1" rx="0.8" fill="none" stroke="#c5c5c5" stroke-width="0.9"/><path d="M2 4.6 V3 Q2 0.5 4.4 0.5 Q6.8 0.5 6.8 2.6" fill="none" stroke="#c5c5c5" stroke-width="0.9"/></svg>
<svg class="a" style="left:922.30px;top:351.80px;" width="10.00" height="10.00" viewBox="0 0 10 10"><path d="M3.4 0.6 H8.2 Q9.3 0.6 9.3 1.7 V8.6 Q9.3 9.6 8.2 9.6 H3.4 Q2.4 9.6 2.4 8.6 V4.2" fill="none" stroke="#8a8a8a" stroke-width="0.85"/><path d="M3.4 0.6 Q0.6 0.6 0.6 2.6 Q0.6 4.2 2.4 4.2 Q3.6 4.2 3.6 2.8" fill="none" stroke="#8a8a8a" stroke-width="0.85"/></svg>
<svg class="a" style="left:944.40px;top:354.60px;" width="6.80" height="4.00" viewBox="0 0 6.8 4"><path d="M0.4 3.6 L3.4 0.6 L6.4 3.6" fill="none" stroke="#c5c5c5" stroke-width="0.9"/></svg>
<svg class="a" style="left:965.50px;top:353.50px;" width="6.60" height="6.60" viewBox="0 0 6.6 6.6"><path d="M0.4 0.4 L6.2 6.2 M6.2 0.4 L0.4 6.2" stroke="#c5c5c5" stroke-width="0.9"/></svg>
<div class="a" style="left:276.10px;top:367.90px;width:701.00px;height:1.20px;background:#000000;opacity:0.55;"></div>
<div class="a" style="left:276.10px;top:369.10px;width:701.00px;height:1.50px;background:#000000;opacity:0.2;"></div>
<div class="a" style="left:977.20px;top:369.00px;width:0.80px;height:175.60px;background:#2b2b2b;"></div>
<div class="t m" style="left:290.20px;top:370px;font-size:8.4px;color:#cccccc;letter-spacing:-0.283px;">[Execute command] blockchain-ethereum-template@0.1.0 /Users/chunlin/Source/Repos/chunlin-blockchain</div>
<div class="t m" style="left:290.20px;top:381px;font-size:8.4px;color:#cccccc;letter-spacing:-0.283px;">`-- (empty)</div>
<div class="t m" style="left:290.20px;top:405px;font-size:8.4px;color:#cccccc;letter-spacing:-0.283px;">[Execute command]</div>
<div class="t m" style="left:290.20px;top:417px;font-size:8.4px;color:#cccccc;letter-spacing:-0.283px;">Compiling your contracts...</div>
<div class="t m" style="left:290.20px;top:429px;font-size:8.4px;color:#cccccc;letter-spacing:-0.283px;">[Execute command] ===========================</div>
<div class="t m" style="left:290.20px;top:441px;font-size:8.4px;color:#cccccc;letter-spacing:-0.283px;">[Execute command] Ganache CLI v6.9.1 (ganache-core: 2.10.2)</div>
<div class="t m" style="left:290.20px;top:453px;font-size:8.4px;color:#cccccc;letter-spacing:-0.283px;">[Execute command] &gt; Compiling ./contracts/HelloBlockchain.sol</div>
<div class="t m" style="left:290.20px;top:464px;font-size:8.4px;color:#cccccc;letter-spacing:-0.283px;">[Execute command] &gt; Compiling ./contracts/Migrations.sol</div>
<div class="t m" style="left:290.20px;top:476px;font-size:8.4px;color:#cccccc;letter-spacing:-0.283px;">[Execute command] &gt; Artifacts written to /Users/chunlin/Source/Repos/chunlin-blockchain/build/contracts</div>
<div class="t m" style="left:290.20px;top:488px;font-size:8.4px;color:#cccccc;letter-spacing:-0.283px;">[Execute command] &gt; Compiled successfully using:</div>
<div class="t m" style="left:290.20px;top:500px;font-size:8.4px;color:#cccccc;letter-spacing:-0.283px;">[Execute command]    - solc: 0.5.16+commit.9c3226ce.Emscripten.clang</div>
<div class="t m" style="left:290.20px;top:512px;font-size:8.4px;color:#cccccc;letter-spacing:-0.283px;">[Execute command]</div>
<div class="t m" style="left:290.20px;top:524px;font-size:8.4px;color:#cccccc;letter-spacing:-0.283px;">[Execute command] Finished running command</div>
<div class="a" style="left:485.24px;top:483.64px;width:294.93px;height:0.80px;background:#a8a8a8;"></div>
<svg class="a" style="left:47.40px;top:546.60px;" width="7.80" height="10.40" viewBox="0 0 7.8 10.4"><circle cx="1.7" cy="1.6" r="1.2" fill="none" stroke="#ffffff" stroke-width="0.8"/><circle cx="1.7" cy="8.8" r="1.2" fill="none" stroke="#ffffff" stroke-width="0.8"/><circle cx="6.2" cy="3.2" r="1.2" fill="none" stroke="#ffffff" stroke-width="0.8"/><path d="M1.7 2.8 V7.6 M6.2 4.4 Q6.2 6.4 1.7 7.2" fill="none" stroke="#ffffff" stroke-width="0.8"/></svg>
<div class="t" style="left:58.20px;top:548px;font-size:8.3px;color:#ffffff;letter-spacing:-0.049px;">master*</div>
<svg class="a" style="left:96.80px;top:548.50px;" width="8.40" height="6.80" viewBox="0 0 8.4 6.8"><path d="M2.3 6.2 H1.9 Q0.4 6.2 0.4 4.6 Q0.4 3.1 1.9 3.0 Q2.2 0.4 4.3 0.4 Q6.4 0.4 6.6 2.8 Q8 3 8 4.5 Q8 6.2 6.3 6.2 H6" fill="none" stroke="#ffffff" stroke-width="0.75"/><path d="M4.2 6.6 V3.2 M2.9 4.4 L4.2 3.1 L5.5 4.4" fill="none" stroke="#ffffff" stroke-width="0.75"/></svg>
<svg class="a" style="left:116.70px;top:547.50px;" width="8.40" height="8.40" viewBox="0 0 8.4 8.4"><circle cx="4.2" cy="4.2" r="3.7" fill="none" stroke="#ffffff" stroke-width="0.8"/><path d="M2.6 2.6 L5.8 5.8 M5.8 2.6 L2.6 5.8" stroke="#ffffff" stroke-width="0.8"/></svg>
<div class="t" style="left:128.30px;top:548px;font-size:8.3px;color:#ffffff;">1</div>
<svg class="a" style="left:133.60px;top:547.40px;" width="8.20" height="7.80" viewBox="0 0 8.2 7.8"><path d="M4.1 0.6 L7.7 7.3 H0.5 Z" fill="none" stroke="#ffffff" stroke-width="0.8" stroke-linejoin="round"/><path d="M4.1 2.9 V5.2 M4.1 5.9 V6.6" stroke="#ffffff" stroke-width="0.8"/></svg>
<div class="t" style="left:144.80px;top:548px;font-size:8.3px;color:#ffffff;">0</div>
<div class="t" style="left:159.70px;top:548px;font-size:8.3px;color:#ffffff;letter-spacing:-0.582px;">Go 1.10.2</div>
<div class="t" style="left:202.50px;top:548px;font-size:8.3px;color:#ffffff;letter-spacing:-0.140px;">Azure: gclin009@hotmail.com</div>
<div class="t" style="left:756.40px;top:548px;font-size:8.3px;color:#ffffff;letter-spacing:-0.288px;">Ln 11, Col 24</div>
<div class="t" style="left:811.80px;top:548px;font-size:8.3px;color:#ffffff;letter-spacing:-0.163px;">Spaces: 4</div>
<div class="t" style="left:858.00px;top:548px;font-size:8.3px;color:#ffffff;letter-spacing:-0.029px;">UTF-8</div>
<div class="t" style="left:891.50px;top:548px;font-size:8.3px;color:#ffffff;letter-spacing:-0.488px;">LF</div>
<div class="t" style="left:910.70px;top:548px;font-size:8.3px;color:#ffffff;letter-spacing:-0.050px;">Solidity</div>
<svg class="a" style="left:947.60px;top:547.00px;" width="9.00" height="8.80" viewBox="0 0 9 8.8"><path d="M3.6 0.5 H8.5 V4.2 H6.2 L5.2 5.2" fill="none" stroke="#ffffff" stroke-width="0.75"/><circle cx="3" cy="4" r="1.5" fill="none" stroke="#ffffff" stroke-width="0.75"/><path d="M0.4 8.5 Q0.6 5.9 3 5.9 Q5.4 5.9 5.6 8.5" fill="none" stroke="#ffffff" stroke-width="0.75"/></svg>
<svg class="a" style="left:967.40px;top:546.80px;" width="8.20" height="9.00" viewBox="0 0 8.2 9"><path d="M1.4 6.6 V3.9 Q1.4 0.6 4.1 0.6 Q6.8 0.6 6.8 3.9 V6.6 L7.7 7.4 H0.5 Z" fill="none" stroke="#ffffff" stroke-width="0.75" stroke-linejoin="round"/><path d="M3 8.2 Q4.1 9.2 5.2 8.2" fill="none" stroke="#ffffff" stroke-width="0.75"/></svg>
<div class="a" style="left:37.00px;top:39.50px;width:1.00px;height:505.10px;background:#494949;"></div>
<div class="a" style="left:985.00px;top:39.50px;width:1.00px;height:505.10px;background:#393939;"></div>
<div class="a" style="left:37.00px;top:39.50px;width:1.40px;height:31.60px;background:#ffffff;"></div>
</body></html>
